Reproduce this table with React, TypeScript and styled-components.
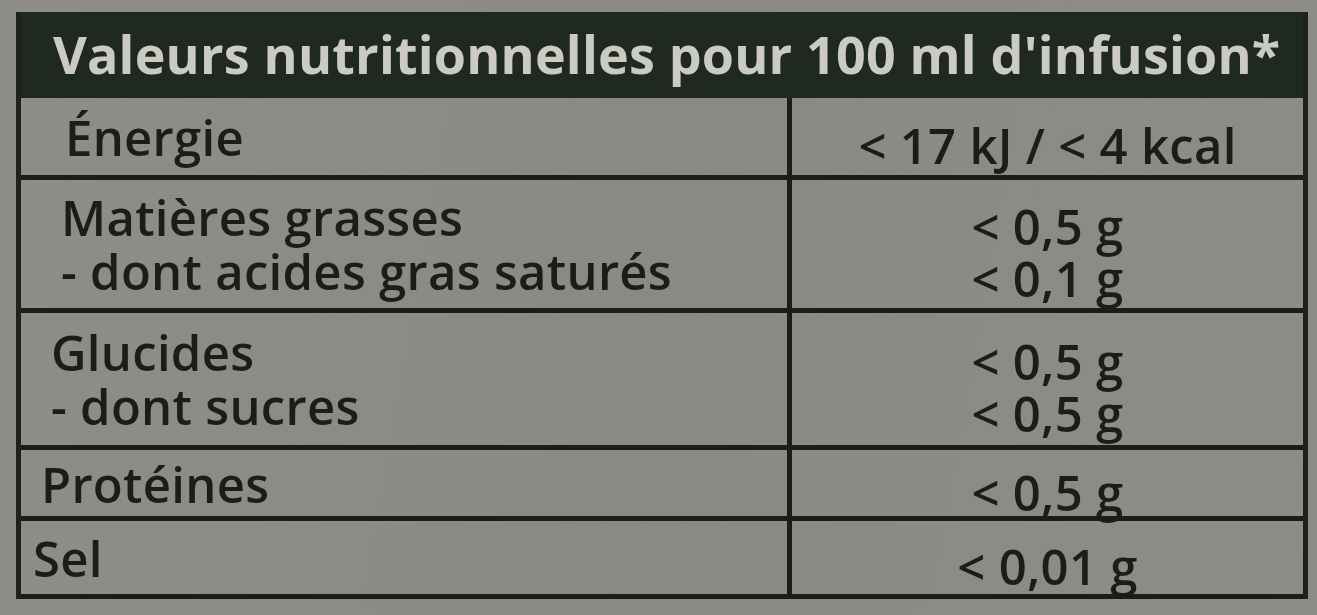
import React from 'react';
import styled, { createGlobalStyle } from 'styled-components';

const GlobalStyle = createGlobalStyle`
  html, body {
    margin: 0;
    padding: 0;
    background: #8c8a85;
  }
  body {
    font-family: "Open Sans", "Liberation Sans", sans-serif;
    overflow: hidden;
  }
`;

const Page = styled.div`
  width: 1317px;
  height: 615px;
  padding: 12px 8px 0 16px;
  box-sizing: border-box;
  background: linear-gradient(100deg, #8f8d88 0%, #8b8984 50%, #8e8c87 100%);
`;

const Table = styled.div`
  width: 1292px;
  border-left: 5px solid #1d221e;
  border-right: 5px solid #1d221e;
  box-sizing: border-box;
`;

const Header = styled.div`
  height: 86px;
  background: #1f2920;
  color: #cbcbc4;
  font-size: 52px;
  font-weight: 700;
  letter-spacing: 0.2px;
  display: flex;
  align-items: center;
  padding: 0 0 4px 32px;
  box-sizing: border-box;
  white-space: nowrap;
`;

const Row = styled.div<{ $h: number }>`
  display: grid;
  grid-template-columns: 766px 1fr;
  height: ${(p) => p.$h}px;
  border-bottom: 5px solid #1a1e1b;
  box-sizing: border-box;
  color: #1a1e1b;
  font-size: 49px;
  font-weight: 600;
  letter-spacing: 0.3px;
`;

const LabelCell = styled.div<{ $indent: number }>`
  padding: 0 0 0 ${(p) => p.$indent}px;
  line-height: 54px;
  display: flex;
  flex-direction: column;
  justify-content: center;
  white-space: nowrap;
`;

const ValueCell = styled.div`
  border-left: 5px solid #1a1e1b;
  display: flex;
  flex-direction: column;
  justify-content: center;
  align-items: center;
  line-height: 52px;
  padding-top: 16px;
  white-space: nowrap;
`;

const rows = [
  { h: 82, indent: 44, labels: ['Énergie'], values: ['< 17 kJ / < 4 kcal'] },
  { h: 133, indent: 40, labels: ['Matières grasses', '- dont acides gras saturés'], values: ['< 0,5 g', '< 0,1 g'] },
  { h: 137, indent: 30, labels: ['Glucides', '- dont sucres'], values: ['< 0,5 g', '< 0,5 g'] },
  { h: 71, indent: 20, labels: ['Protéines'], values: ['< 0,5 g'] },
  { h: 78, indent: 12, labels: ['Sel'], values: ['< 0,01 g'] },
];

export default function App() {
  return (
    <>
      <GlobalStyle />
      <Page>
        <Table>
          <Header>Valeurs nutritionnelles pour 100 ml d'infusion*</Header>
          {rows.map((r) => (
            <Row key={r.labels[0]} $h={r.h}>
              <LabelCell $indent={r.indent}>
                {r.labels.map((l) => (
                  <span key={l}>{l}</span>
                ))}
              </LabelCell>
              <ValueCell>
                {r.values.map((v, i) => (
                  <span key={i}>{v}</span>
                ))}
              </ValueCell>
            </Row>
          ))}
        </Table>
      </Page>
    </>
  );
}
